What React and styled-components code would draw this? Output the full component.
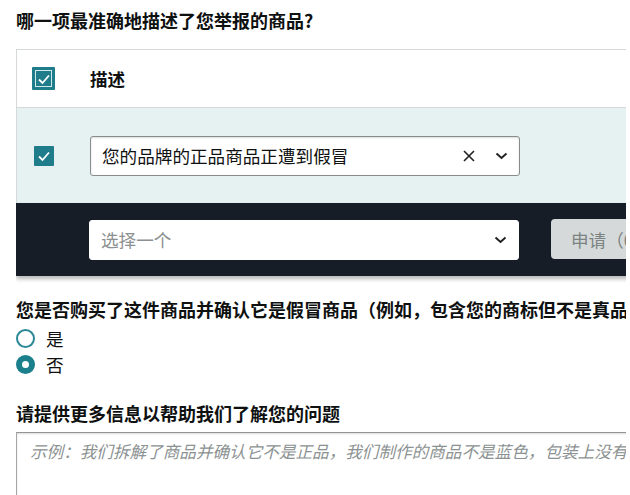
import styled, { createGlobalStyle } from 'styled-components';

const GlobalStyle = createGlobalStyle`
  html, body {
    margin: 0;
    padding: 0;
    background: #fff;
  }
  body {
    font-family: "Noto Sans CJK SC", "Noto Sans", sans-serif;
    color: #0f1111;
  }
`;

const Clip = styled.div`
  width: 610px;
  margin-left: 16px;
  overflow: hidden;
  padding-top: 8px;
  padding-bottom: 20px;
`;

const Form = styled.div`
  width: 900px;
`;

const Heading = styled.div`
  font-size: 18px;
  line-height: 24px;
  font-weight: 700;
  white-space: nowrap;
  margin-top: ${p => p.top || 0}px;
`;

const Table = styled.div`
  margin-top: 17px;
  border: 1px solid #d5d9d9;
  border-bottom: 0;
`;

const Row = styled.div`
  display: flex;
  align-items: center;
  gap: 35px;
  padding-left: 15px;
  height: ${p => p.h}px;
  background: ${p => p.bg || '#fff'};
  border-bottom: ${p => (p.line ? '1px solid #d5d9d9' : '0')};
`;

const CheckCell = styled.div`
  width: 23px;
  display: flex;
  justify-content: center;
`;

const Check = styled.div`
  width: ${p => (p.big ? 23 : 20)}px;
  height: ${p => (p.big ? 23 : 20)}px;
  box-sizing: border-box;
  background: #1f7c8b;
  border-radius: 1px;
  display: flex;
  align-items: center;
  justify-content: center;
  position: relative;

  ${p => p.big && `
    &:before {
      content: '';
      position: absolute;
      inset: 3px;
      border: 1.5px solid #cfe8ea;
    }
  `}
`;

const ColTitle = styled.div`
  font-size: 17.5px;
  font-weight: 700;
`;

const Select = styled.div`
  width: ${p => p.w}px;
  height: 40px;
  box-sizing: border-box;
  background: #fff;
  border: 1px solid ${p => (p.dark ? '#fff' : '#888c8c')};
  border-radius: 3px;
  box-shadow: ${p => (p.dark ? 'none' : '0 1px 2px rgba(15,17,17,0.15) inset')};
  display: flex;
  align-items: center;
  padding: 0 11px 0 11px;
  font-size: 17.6px;
  color: ${p => (p.placeholder ? '#8c9090' : '#0f1111')};
`;

const Value = styled.div`
  flex: 1;
  white-space: nowrap;
`;

const Icons = styled.div`
  display: flex;
  align-items: center;
  gap: 20px;
  color: #222;
`;

const Bar = styled.div`
  display: flex;
  align-items: center;
  gap: 32px;
  height: 73px;
  padding-left: 73px;
  background: #161d26;
  box-shadow: 0 3px 4px rgba(0, 0, 0, 0.28);
`;

const ApplyButton = styled.button`
  height: 40px;
  margin-top: -1px;
  padding: 0 20px;
  border: 0;
  border-radius: 4px;
  background: #d5d9d9;
  color: #7b8383;
  font-family: inherit;
  font-size: 17.6px;
  white-space: nowrap;
  width: 140px;
  text-align: left;
`;

const RadioGroup = styled.div`
  padding-top: 4px;
`;

const RadioRow = styled.label`
  display: flex;
  align-items: center;
  gap: 11px;
  height: 26px;
  font-size: 17.6px;
`;

const RadioDot = styled.span`
  width: 19px;
  height: 19px;
  box-sizing: border-box;
  border-radius: 50%;
  border: ${p => (p.on ? '6px solid #1b7f8c' : '2px solid #2a8795')};
  background: #fff;
`;

const TextBox = styled.textarea`
  display: block;
  margin-top: 7px;
  width: 100%;
  height: 110px;
  box-sizing: border-box;
  border: 1px solid #a6a6a6;
  border-top-color: #949494;
  box-shadow: 0 1px 2px rgba(15, 17, 17, 0.15) inset;
  padding: 6px 13px;
  font-family: inherit;
  font-size: 16.6px;
  line-height: 24px;
  resize: none;
  outline: none;

  &::placeholder {
    color: #8c9292;
    font-style: italic;
  }
`;

const Tick = () => (
  <svg width="14" height="12" viewBox="0 0 14 12">
    <polyline points="2,6.5 5.5,10 12,2.5" fill="none" stroke="#fff" strokeWidth="1.8" />
  </svg>
);

const Cross = () => (
  <svg width="12" height="12" viewBox="0 0 12 12">
    <path d="M1 1 L11 11 M11 1 L1 11" stroke="#222" strokeWidth="1.6" />
  </svg>
);

const Chevron = () => (
  <svg width="13" height="8" viewBox="0 0 13 8">
    <polyline points="1.5,1.5 6.5,6 11.5,1.5" fill="none" stroke="#222" strokeWidth="2" />
  </svg>
);

export default function App() {
  return (
    <>
      <GlobalStyle />
      <Clip>
        <Form>
          <Heading>哪一项最准确地描述了您举报的商品?</Heading>
          <Table>
            <Row h={57} line>
              <CheckCell>
                <Check big><Tick /></Check>
              </CheckCell>
              <ColTitle>描述</ColTitle>
            </Row>
            <Row h={95} bg="#e6f2f2">
              <CheckCell>
                <Check><Tick /></Check>
              </CheckCell>
              <Select w={430}>
                <Value>您的品牌的正品商品正遭到假冒</Value>
                <Icons>
                  <Cross />
                  <Chevron />
                </Icons>
              </Select>
            </Row>
          </Table>
          <Bar>
            <Select w={430} dark placeholder="1">
              <Value>选择一个</Value>
              <Icons>
                <Chevron />
              </Icons>
            </Select>
            <ApplyButton disabled>申请（0）</ApplyButton>
          </Bar>

          <Heading top={21}>您是否购买了这件商品并确认它是假冒商品（例如，包含您的商标但不是真品）？</Heading>
          <RadioGroup>
            <RadioRow>
              <RadioDot />
              是
            </RadioRow>
            <RadioRow>
              <RadioDot on />
              否
            </RadioRow>
          </RadioGroup>

          <Heading top={24}>请提供更多信息以帮助我们了解您的问题</Heading>
          <TextBox placeholder="示例：我们拆解了商品并确认它不是正品，我们制作的商品不是蓝色，包装上没有我们的徽标。" />
        </Form>
      </Clip>
    </>
  );
}
